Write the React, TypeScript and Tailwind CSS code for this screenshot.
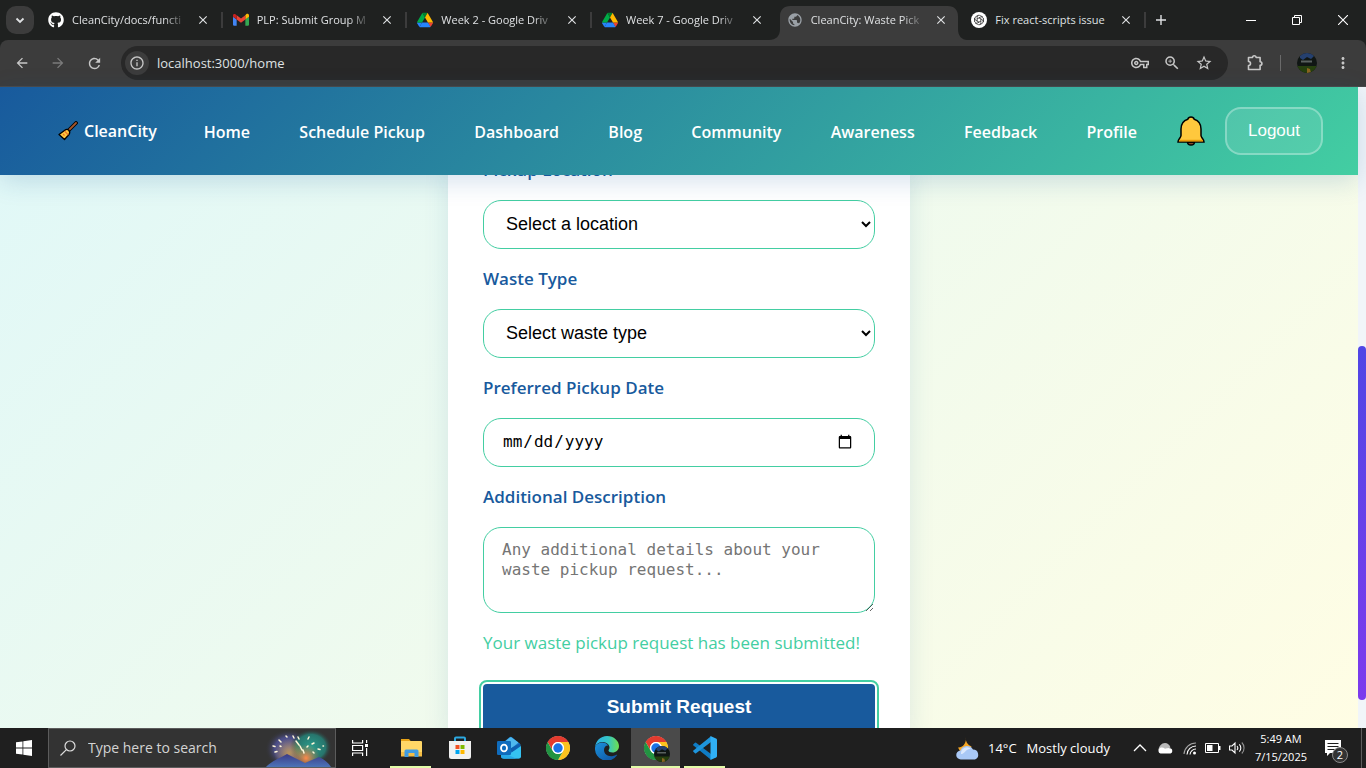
import { useId, type ReactNode } from "react";
import { FaGithub } from "react-icons/fa";
import {
  MdArrowBack,
  MdArrowForward,
  MdClose,
  MdInfoOutline,
  MdMoreVert,
  MdOutlineVpnKey,
  MdPublic,
  MdRefresh,
  MdStarBorder,
  MdZoomIn,
} from "react-icons/md";

/* ---------- Brand icons ---------- */

function GmailIcon() {
  return (
    <svg viewBox="0 0 24 24" className="size-4" aria-hidden="true">
      <path fill="#4285f4" d="M1.6 20.5h3.9V11.2L0 7v12a1.6 1.6 0 0 0 1.6 1.5z" />
      <path fill="#34a853" d="M18.500 20.500h3.900A1.600 1.600 0 0 0 24 19V7l-5.500 4.200z" />
      <path fill="#fbbc04" d="M18.500 4.900v6.300L24 7V5c0-2-2.300-3.200-3.900-2z" />
      <path fill="#ea4335" d="M5.500 11.200V4.900l6.500 4.900 6.500-4.900v6.300L12 16.100z" />
      <path fill="#c5221f" d="M0 5v2l5.500 4.200V4.900L3.900 3.600C2.300 2.400 0 3.500 0 5z" />
    </svg>
  );
}

function DriveIcon() {
  return (
    <svg viewBox="0 0 87.300 78" className="size-4" aria-hidden="true">
      <path fill="#2684fc" d="m6.600 66.850 3.850 6.650c.8 1.400 1.950 2.500 3.300 3.300l13.750-23.800h-27.500c0 1.550.4 3.100 1.200 4.500z" />
      <path fill="#00ac47" d="m43.650 25-13.750-23.800c-1.350.8-2.500 1.900-3.300 3.300l-25.400 44a9.060 9.060 0 0 0-1.200 4.500h27.500z" />
      <path fill="#ea4335" d="m73.550 76.800c1.350-.8 2.500-1.900 3.300-3.300l1.600-2.750 7.650-13.250c.8-1.400 1.200-2.950 1.200-4.500h-27.500l5.850 11.500z" />
      <path fill="#00832d" d="m43.650 25 13.750-23.800c-1.350-.8-2.900-1.200-4.500-1.200h-18.500c-1.600 0-3.150.45-4.500 1.200z" />
      <path fill="#2684fc" d="m59.800 53h-32.300l-13.750 23.800c1.350.8 2.900 1.200 4.500 1.200h50.800c1.600 0 3.150-.45 4.500-1.200z" />
      <path fill="#ffba00" d="m73.400 26.500-12.700-22c-.8-1.400-1.950-2.500-3.300-3.300l-13.750 23.800 16.150 28h27.450c0-1.550-.4-3.100-1.200-4.500z" />
    </svg>
  );
}

function KnotIcon() {
  return (
    <svg viewBox="0 0 24 24" className="size-4" aria-hidden="true">
      <circle cx="12" cy="12" r="12" fill="#fff" />
      <g fill="none" stroke="#222" strokeWidth="1.100">
        {[0, 60, 120, 180, 240, 300].map((a) => (
          <path key={a} transform={`rotate(${a} 12 12)`} d="M9.200 13.600V8.300a3.300 3.300 0 0 1 5-2.800l3.600 2.100" />
        ))}
      </g>
    </svg>
  );
}

function PuzzleIcon() {
  return (
    <svg viewBox="0 0 18 18" className="size-[18px]" fill="none" stroke="currentColor" strokeWidth="1.600" strokeLinejoin="round" aria-hidden="true">
      <path d="M2.500 3.500h4a1.800 1.800 0 0 1 3.600 0h4v4.200a1.800 1.800 0 0 1 0 3.600v4.200H2.500v-4a2 2 0 0 0 0-4z" />
    </svg>
  );
}

function ChromeIcon({ className = "size-6" }: { className?: string }) {
  return (
    <svg viewBox="0 0 48 48" className={className} aria-hidden="true">
      <circle cx="24" cy="24" r="23.500" fill="#fff" />
      <path fill="#e33b2e" d="M24 12h20.800A24 24 0 0 0 3.200 12l10.400 18A12 12 0 0 1 24 12z" />
      <path fill="#fcc31e" d="M34.400 30 24 48a24 24 0 0 0 20.800-36H24a12 12 0 0 1 10.400 18z" />
      <path fill="#229342" d="M13.600 30 3.200 12A24 24 0 0 0 24 48l10.400-18a12 12 0 0 1-20.800 0z" />
      <circle cx="24" cy="24" r="11.800" fill="#fff" />
      <circle cx="24" cy="24" r="9.400" fill="#1a73e8" />
    </svg>
  );
}

function EdgeIcon() {
  const id = useId();
  return (
    <svg viewBox="0 0 48 48" className="size-6" aria-hidden="true">
      <defs>
        <linearGradient id={`${id}a`} x1="0" y1="0.300" x2="1" y2="0.300">
          <stop offset="0" stopColor="#2bb0e8" />
          <stop offset="0.550" stopColor="#35c5c5" />
          <stop offset="1" stopColor="#6fe04c" />
        </linearGradient>
        <linearGradient id={`${id}b`} x1="0" y1="0" x2="1" y2="1">
          <stop offset="0" stopColor="#1b93dc" />
          <stop offset="1" stopColor="#0f4f9d" />
        </linearGradient>
      </defs>
      <path fill={`url(#${id}b)`} d="M0 24c0-6 7-11 15-11 6 0 10 3 11 6-5 0-8 4-8 9 0 9 9 14 18 12 3-.6 5-1.600 7-2.500 1-.4 1.600.4 1 1.200A24 24 0 0 1 0 24z" />
      <path fill={`url(#${id}a)`} d="M0 23C1 10 11 0 24 0c14 0 24 10 24 20 0 8-6 13-13 13-5 0-8-2-8-4 0-1.600 2-2.500 2-6 0-6-6-11-14-11C7 12 1 17 0 23z" />
    </svg>
  );
}

function OutlookIcon() {
  return (
    <svg viewBox="0 0 48 48" className="size-6" aria-hidden="true">
      <path fill="#1a7fd0" d="M8 17 25 2.500a4 4 0 0 1 5 0L47 17v24a4 4 0 0 1-4 4H12a4 4 0 0 1-4-4z" />
      <path fill="#4fb8ee" d="M12 14 26 3a3 3 0 0 1 3 0l14 10-17 14H12z" />
      <path fill="#0f5fb0" d="M25 26 46 14v9L30 33z" />
      <path fill="#35c2f1" d="M48 20 12 45h32a4 4 0 0 0 4-4z" />
      <path fill="#27a9e8" d="M8 31l30 14H12a4 4 0 0 1-4-4z" />
      <rect x="0" y="10" width="28" height="28" rx="2.500" fill="#0f6cbd" />
      <ellipse cx="14" cy="24" rx="6" ry="6.800" fill="none" stroke="#fff" strokeWidth="3.600" />
    </svg>
  );
}

function StoreIcon() {
  return (
    <svg viewBox="0 0 24 24" className="size-6" aria-hidden="true">
      <path d="M7 6V2.500a1 1 0 0 1 1-1h8a1 1 0 0 1 1 1V6" fill="none" stroke="#2ca8e0" strokeWidth="2" />
      <path d="M1 5h22v15.500A2.500 2.500 0 0 1 20.500 23h-17A2.500 2.500 0 0 1 1 20.500z" fill="#f1f1f1" />
      <path fill="#f25022" d="M7.500 9h4v4h-4z" />
      <path fill="#7fba00" d="M12.500 9h4v4h-4z" />
      <path fill="#00a4ef" d="M7.500 14h4v4h-4z" />
      <path fill="#ffb900" d="M12.500 14h4v4h-4z" />
    </svg>
  );
}

function ExplorerIcon() {
  return (
    <svg viewBox="0 0 24 24" className="size-6" aria-hidden="true">
      <path fill="#e8a317" d="M2 3h8l2 2.500H2z" />
      <path fill="#ffd767" d="M2 5h20a1 1 0 0 1 1 1v14H2z" />
      <path fill="#f4bd45" d="M2 16h21v4.500H2z" />
      <path fill="#3f9be0" d="M5.500 21v-6a1.500 1.500 0 0 1 1.500-1.500h11a1.500 1.500 0 0 1 1.500 1.500v6h-4v-4h-6v4z" />
    </svg>
  );
}

function CodeIcon() {
  return (
    <svg viewBox="0 0 24 24" className="size-6" aria-hidden="true">
      <path fill="#0f7cc4" d="M.4 8.300 2 6.800a.9.9 0 0 1 1.100 0L18 18.100v5.600L.4 9.600a.9.9 0 0 1 0-1.300z" />
      <path fill="#1e95dc" d="M.4 15.700 2 17.200c.3.300.8.300 1.100 0L18 5.900V.3L.4 14.400a.9.9 0 0 0 0 1.300z" />
      <path fill="#30b0f5" d="m17.500 0 5.500 2.400c.6.300 1 .8 1 1.500v16.200c0 .7-.4 1.200-1 1.500L17.500 24z" />
    </svg>
  );
}

function Avatar({ className }: { className: string }) {
  const id = useId();
  return (
    <svg viewBox="0 0 20 20" className={className} aria-hidden="true">
      <clipPath id={id}>
        <circle cx="10" cy="10" r="10" />
      </clipPath>
      <g clipPath={`url(#${id})`}>
        <path fill="#101614" d="M0 0h20v20H0z" />
        <path fill="#25406f" d="M3 0h14v3l-3 3-4-2-4 3-3-2z" />
        <path fill="#59615f" d="M4 7.500h11v2H4z" />
        <path fill="#26400f" d="M0 13h20v7H0z" />
        <path fill="#8a6420" d="M10 15l3 1 1 4h-4z" />
      </g>
    </svg>
  );
}

/* ---------- Browser chrome ---------- */

type Tab = { title: string; icon: ReactNode; active?: boolean };

const tabs: Tab[] = [
  { title: "CleanCity/docs/functi", icon: <FaGithub className="size-4 text-white" /> },
  { title: "PLP: Submit Group M", icon: <GmailIcon /> },
  { title: "Week 2 - Google Driv", icon: <DriveIcon /> },
  { title: "Week 7 - Google Driv", icon: <DriveIcon /> },
  { title: "CleanCity: Waste Pick", icon: <MdPublic className="size-4 text-[#9aa0a6]" />, active: true },
  { title: "Fix react-scripts issue", icon: <KnotIcon /> },
];

function TabStrip() {
  return (
    <div className="flex h-10 bg-[#1f2120] pl-1.5 text-[#dfe1e3]">
      <button aria-label="Search tabs" className="mt-1.5 flex size-7 shrink-0 items-center justify-center rounded-[10px] bg-[#3c3c3c]">
        <svg viewBox="0 0 10 10" className="size-2.5" fill="none" stroke="currentColor" strokeWidth="1.800">
          <path d="M1.500 3.500 5 7l3.500-3.500" />
        </svg>
      </button>
      <div className="ml-1 flex max-w-[1108px] min-w-0 flex-1">
        {tabs.map((tab, i) => (
          <div key={tab.title} className="relative flex h-10 min-w-0 flex-1 items-center pr-3 pl-2.5">
            {tab.active && (
              <svg viewBox="0 0 198 34" className="absolute top-1.5 -left-2 h-[34px] w-[198px]" aria-hidden="true">
                <path fill="#3c3c3c" d="M0 34c7 0 11-4 11-11V10C11 4 15 0 21 0h158c6 0 10 4 10 10v13c0 7 4 11 9 11z" />
              </svg>
            )}
            <span className="relative shrink-0">{tab.icon}</span>
            <span
              className={
                i === tabs.length - 1
                  ? "relative ml-2 flex-1 text-[11px] leading-5 whitespace-nowrap"
                  : "relative ml-2 flex-1 text-[11px] leading-5 whitespace-nowrap [mask-image:linear-gradient(90deg,#000_80%,transparent)]"
              }
            >
              {tab.title}
            </span>
            <button aria-label={`Close ${tab.title}`} className="relative ml-2 flex size-4 shrink-0 items-center justify-center">
              <MdClose className="size-3.5" />
            </button>
            {i !== 3 && i !== 4 && <span className="absolute top-3 right-0 h-4 w-0.5 bg-[#3c3c3c]" />}
          </div>
        ))}
      </div>
      <button aria-label="New tab" className="ml-[3px] flex h-10 w-6 items-center justify-center">
        <svg viewBox="0 0 10 10" className="size-2.5" stroke="currentColor" strokeWidth="1.400">
          <path d="M5 0v10M0 5h10" />
        </svg>
      </button>
      <div className="ml-auto flex text-white">
        <button aria-label="Minimize" className="flex h-10 w-[46px] items-center justify-center">
          <span className="h-px w-2.5 bg-white" />
        </button>
        <button aria-label="Restore" className="flex h-10 w-[46px] items-center justify-center">
          <svg viewBox="0 0 10 10" className="size-2.5" fill="none" stroke="currentColor">
            <path d="M.5 2.500h7v7h-7zM2.500 2.500v-2h7v7h-2" />
          </svg>
        </button>
        <button aria-label="Close window" className="flex h-10 w-[46px] items-center justify-center">
          <svg viewBox="0 0 10 10" className="size-2.5" stroke="currentColor" strokeWidth="1.100">
            <path d="M0 0l10 10M10 0L0 10" />
          </svg>
        </button>
      </div>
    </div>
  );
}

function Toolbar() {
  return (
    <div className="bg-[#1f2120]">
      <div className="flex h-[47px] items-center rounded-t-lg border-b border-[#4a4a4a] bg-[#3c3c3c] px-3.5 text-[#c7c7c7]">
        <button aria-label="Back" className="mr-5 shrink-0"><MdArrowBack className="size-4" /></button>
        <button aria-label="Forward" className="mr-5 shrink-0 text-[#7b7b7b]"><MdArrowForward className="size-4" /></button>
        <button aria-label="Reload" className="mr-[18px] shrink-0"><MdRefresh className="size-[17px]" /></button>
        <div className="flex h-[34px] min-w-0 flex-1 items-center rounded-full bg-[#282828] pr-[15px] pl-1">
          <button aria-label="Site information" className="flex size-6 items-center justify-center rounded-full bg-[#3c3c3c]">
            <MdInfoOutline className="size-4" />
          </button>
          <input
            aria-label="Address"
            defaultValue="localhost:3000/home"
            className="ml-2 min-w-0 flex-1 bg-transparent text-[13px] leading-5 text-[#dfe1e3] outline-none"
          />
          <div className="flex items-center gap-3.5">
            <button aria-label="Passwords"><MdOutlineVpnKey className="size-[18px]" /></button>
            <button aria-label="Zoom"><MdZoomIn className="size-[18px]" /></button>
            <button aria-label="Bookmark"><MdStarBorder className="size-[18px]" /></button>
          </div>
        </div>
        <button aria-label="Extensions" className="ml-[18px]"><PuzzleIcon /></button>
        <span className="mx-4 h-4 w-px bg-[#6a6a6a]" />
        <button aria-label="Profile menu"><Avatar className="size-5" /></button>
        <button aria-label="Browser menu" className="ml-[17px]"><MdMoreVert className="size-[18px]" /></button>
      </div>
    </div>
  );
}

/* ---------- CleanCity site ---------- */

const links = ["Home", "Schedule Pickup", "Dashboard", "Blog", "Community", "Awareness", "Feedback", "Profile"];

function BroomIcon() {
  return (
    <svg viewBox="0 0 20 20" className="size-5 shrink-0" aria-hidden="true">
      <path d="M10.500 9.500 18 2" stroke="#000" strokeWidth="3.800" strokeLinecap="round" />
      <path d="M10 10 18 2" stroke="#a5562b" strokeWidth="1.800" strokeLinecap="round" />
      <path d="M6.500 9.500c1.500-1.300 3-1.500 4.300-.3 1.200 1.300 1.200 2.800.2 4.300l-4.500 5L1 13.500z" fill="#ffc83d" stroke="#000" strokeWidth="1.300" strokeLinejoin="round" />
      <path d="m6.600 10.200 3.700 3.800M5 13l1.500 1.500" stroke="#e8702a" strokeWidth="1.100" />
    </svg>
  );
}

function BellIcon() {
  return (
    <svg viewBox="0 0 28 30" className="h-[30px] w-7" aria-hidden="true">
      <path d="M10.500 26h7a3.500 3 0 0 1-7 0z" fill="#8a4b2a" stroke="#000" strokeWidth="1.400" />
      <path
        d="M14 1c1.800 0 2.900 1 3.200 2.200C21.600 4.600 24 8.300 24 13v6.500c0 2 3 3.700 3 6.500H1c0-2.800 3-4.500 3-6.500V13c0-4.700 2.400-8.400 6.800-9.800C11.100 2 12.200 1 14 1z"
        fill="#ffc83d"
        stroke="#000"
        strokeWidth="1.500"
      />
      <path d="M2.400 23.800h23.200l.6 1.700H1.800z" fill="#e89b0c" />
    </svg>
  );
}

function SiteHeader() {
  return (
    <header className="relative z-10 flex h-[88px] shrink-0 items-center bg-[linear-gradient(135deg,#185a9d,#43cea2)] pr-[35px] pl-[58px] text-white shadow-[0_6px_24px_rgba(24,90,157,0.18)]">
      <a href="#home" className="flex shrink-0 items-center gap-1.5 text-[16px] leading-6 font-semibold">
        <BroomIcon />
        CleanCity
      </a>
      <nav className="mr-10 ml-[47px] flex flex-1 justify-between pt-0.5">
        {links.map((l) => (
          <a key={l} href="#home" className="text-[16px] leading-6 font-semibold whitespace-nowrap">
            {l}
          </a>
        ))}
      </nav>
      <button aria-label="Notifications" className="mr-5 shrink-0"><BellIcon /></button>
      <button className="h-12 shrink-0 rounded-2xl border-2 border-white/30 bg-white/10 px-[21px] font-['Liberation_Sans',sans-serif] text-[17px]">
        Logout
      </button>
    </header>
  );
}

const labelClass = "text-[17px] leading-6 font-semibold text-[#185a9d]";
const fieldClass = "w-full rounded-[18px] border border-[#43cea2] bg-white text-black outline-none";

function PickupForm() {
  return (
    <form
      onSubmit={(e) => e.preventDefault()}
      className="-mt-[17px] flex w-[462px] flex-col gap-[18px] bg-white px-[35px] shadow-[0_8px_24px_rgba(24,90,157,0.12)]"
    >
      <label htmlFor="location" className={labelClass}>Pickup Location</label>
      <select id="location" className={`${fieldClass} h-[49px] pr-px pb-0.5 pl-[18px] font-['Liberation_Sans',sans-serif] text-[18px]`}>
        <option>Select a location</option>
      </select>
      <label htmlFor="waste" className={labelClass}>Waste Type</label>
      <select id="waste" className={`${fieldClass} h-[49px] pr-px pb-0.5 pl-[18px] font-['Liberation_Sans',sans-serif] text-[18px]`}>
        <option>Select waste type</option>
      </select>
      <label htmlFor="date" className={labelClass}>Preferred Pickup Date</label>
      <input id="date" type="date" className={`${fieldClass} h-[49px] pr-[19px] pb-0.5 pl-[18px] font-['DejaVu_Sans_Mono',monospace] text-[16px]`} />
      <label htmlFor="details" className={labelClass}>Additional Description</label>
      <textarea
        id="details"
        placeholder="Any additional details about your waste pickup request..."
        className={`${fieldClass} h-[86px] px-[18px] py-3 font-['DejaVu_Sans_Mono',monospace] text-[16px] leading-5 placeholder:text-[#757575]`}
      />
      <p className="text-[17px] leading-6 text-[#43cea2]">Your waste pickup request has been submitted!</p>
      <button className="mt-[11px] h-12 shrink-0 rounded bg-[#185a9d] pb-0.5 font-['Liberation_Sans',sans-serif] text-[19px] font-bold text-white outline-2 outline-offset-2 outline-[#43cea2]">
        Submit Request
      </button>
    </form>
  );
}

/* ---------- Taskbar ---------- */

function TaskButton({ label, children, underline, active }: { label: string; children: ReactNode; underline?: boolean; active?: boolean }) {
  return (
    <button aria-label={label} className={`relative flex h-10 w-[49px] shrink-0 items-center justify-center ${active ? "bg-[#4a4a4a]" : ""}`}>
      {children}
      {(underline || active) && (
        <span className={`absolute bottom-0 h-0.5 bg-[#e2fba8] ${active ? "inset-x-0" : "inset-x-1"}`} />
      )}
    </button>
  );
}

function SearchArt() {
  const id = useId();
  return (
    <svg viewBox="0 0 68 38" className="mr-0.5 h-[38px] w-[68px] shrink-0" aria-hidden="true">
      <defs>
        <radialGradient id={`${id}a`}>
          <stop offset="0" stopColor="#5c5fa8" />
          <stop offset="0.600" stopColor="#4b4d86" />
          <stop offset="1" stopColor="#333" stopOpacity="0" />
        </radialGradient>
        <radialGradient id={`${id}b`}>
          <stop offset="0" stopColor="#2a9c8c" />
          <stop offset="0.700" stopColor="#27756c" />
          <stop offset="1" stopColor="#333" stopOpacity="0" />
        </radialGradient>
        <radialGradient id={`${id}c`}>
          <stop offset="0" stopColor="#ff8a4a" />
          <stop offset="1" stopColor="#c08a50" stopOpacity="0" />
        </radialGradient>
        <radialGradient id={`${id}e`}>
          <stop offset="0" stopColor="#d2a24a" stopOpacity="0.800" />
          <stop offset="1" stopColor="#d2a24a" stopOpacity="0" />
        </radialGradient>
        <linearGradient id={`${id}d`} x1="0" y1="0" x2="0" y2="1">
          <stop offset="0" stopColor="#3b3a86" />
          <stop offset="1" stopColor="#4c74b8" />
        </linearGradient>
      </defs>
      <ellipse cx="24" cy="20" rx="24" ry="20" fill={`url(#${id}a)`} />
      <ellipse cx="46" cy="18" rx="21" ry="18" fill={`url(#${id}b)`} />
      <circle cx="24" cy="24" r="15" fill={`url(#${id}e)`} />
      <circle cx="41" cy="29" r="14" fill={`url(#${id}c)`} />
      <path d="M1 38c4-5 14-9 21-13l18 9 14-6c4 2 9 5 12 10z" fill={`url(#${id}d)`} />
      <g stroke="#fff6d8" strokeWidth="1.500" strokeLinecap="round">
        <path d="M21 7l1 1M14 11l2 2M8 17l2 .5M10 23l2-.5M15 17l1 .5M28 7l1 2M31 12l3 4M35 17l2 4M38 21l1 3M44 8l-1 2M49 14l-2 1M53 20l2 .5M58 17h.5M48 23l1 1M33 8l1 2M43 17l-1 1" />
      </g>
    </svg>
  );
}

function Taskbar() {
  return (
    <footer className="flex h-10 shrink-0 items-center bg-[#1f1f1f] text-white">
      <button aria-label="Start" className="flex h-10 w-12 shrink-0 items-center justify-center">
        <svg viewBox="0 0 16 16" className="size-4" fill="#fff">
          <path d="M0 2.300 6.500 1.400v6.200H0zM7.300 1.300 16 0v7.600H7.300zM0 8.400h6.500v6.200L0 13.700zM7.300 8.400H16V16l-8.700-1.300z" />
        </svg>
      </button>
      <label className="flex h-10 w-72 shrink-0 items-center border border-[#5c5c5c] bg-[#333] pl-[11px]">
        <svg viewBox="0 0 16 16" className="size-4 shrink-0" fill="none" stroke="#ddd" strokeWidth="1.200">
          <circle cx="10" cy="6" r="5" />
          <path d="M6.400 9.600.5 15.500" />
        </svg>
        <input
          aria-label="Search Windows"
          placeholder="Type here to search"
          className="ml-3 min-w-0 flex-1 bg-transparent text-[14px] leading-5 outline-none placeholder:text-[#d4d4d4]"
        />
        <SearchArt />
      </label>
      <button aria-label="Task view" className="mr-0.5 flex h-10 w-12 shrink-0 items-center justify-center">
        <svg viewBox="0 0 16 16" className="size-4" fill="none" stroke="#fff" strokeWidth="1.200">
          <path d="M.6 0v3h10V0M.6 5.500h10v5H.6zM.6 16v-3h10v3M14.600 0v3M14.600 8v8" />
          <path d="M13 4h3v3h-3z" fill="#fff" stroke="none" />
        </svg>
      </button>
      <TaskButton label="File Explorer" underline><ExplorerIcon /></TaskButton>
      <TaskButton label="Microsoft Store"><StoreIcon /></TaskButton>
      <TaskButton label="Outlook"><OutlookIcon /></TaskButton>
      <TaskButton label="Google Chrome"><ChromeIcon /></TaskButton>
      <TaskButton label="Microsoft Edge"><EdgeIcon /></TaskButton>
      <TaskButton label="Google Chrome, CleanCity" active>
        <ChromeIcon />
        <Avatar className="absolute right-[10px] bottom-1.5 size-4" />
      </TaskButton>
      <TaskButton label="Visual Studio Code" underline><CodeIcon /></TaskButton>

      <div className="ml-auto flex h-10 items-center text-[13px]">
        <button className="mr-[23px] flex items-center leading-5 whitespace-nowrap">
          <svg viewBox="0 0 24 24" className="size-6" aria-hidden="true">
            <path fill="#f5a623" d="M10 1a8 8 0 0 0 5.500 9.500L14 15H4l-2-3.500C6 12 10.500 8 10 1z" />
            <path fill="#a9c8f5" d="M5 23.500a4.500 4.500 0 0 1-.5-9 7 7 0 0 1 12.500-1 5.200 5.200 0 0 1 2 10z" />
            <path fill="#dbe8fc" d="M5 18a6 6 0 0 1 10-5c-5-1-6 5-10 5z" />
          </svg>
          <span className="ml-2">14°C</span>
          <span className="ml-2.5">Mostly cloudy</span>
        </button>
        <button aria-label="Show hidden icons" className="mr-2.5">
          <svg viewBox="0 0 14 8" className="h-2 w-3.5" fill="none" stroke="#fff" strokeWidth="1.300">
            <path d="M1 7l6-6 6 6" />
          </svg>
        </button>
        <svg viewBox="0 0 16 12" className="mr-2.5 h-3 w-4" aria-label="OneDrive">
          <path fill="#b9b9b9" d="M1.500 7.500C2 4 4.500 1 8 1c2.500 0 4.500 1.500 5.500 4.500L4 10z" />
          <path fill="#fff" d="M3.500 11.500a3 3 0 0 1-.5-5.500c2-.8 3.500-.3 5 .8 2-.8 4.500-1.300 6-.3a2.800 2.800 0 0 1-.5 5z" />
        </svg>
        <svg viewBox="0 0 14 14" className="mr-2 size-3.5" fill="none" stroke="#fff" strokeWidth="1.100" aria-label="Wi-Fi">
          <path d="M1 13A12 12 0 0 1 13 2" opacity="0.600" />
          <path d="M4 13.500A9 9 0 0 1 13 5M7 13.500A6 6 0 0 1 13 8" />
          <circle cx="11.500" cy="12" r="1.500" fill="#fff" stroke="none" />
        </svg>
        <svg viewBox="0 0 16 10" className="mr-2 h-2.5 w-4" fill="none" stroke="#fff" aria-label="Battery">
          <path d="M.5.5h13v9H.5z" />
          <path d="M2 2h5.500v6H2zM14 3h1.500v4H14z" fill="#fff" stroke="none" />
        </svg>
        <svg viewBox="0 0 16 14" className="mr-2.5 h-3.5 w-4" fill="none" stroke="#fff" strokeWidth="1.100" aria-label="Volume">
          <path d="M.5 5v4H3l3 3V2L3 5zM8 5c1 1.200 1 2.800 0 4M10.300 3.300c2 2 2 5.400 0 7.400" />
          <path d="M12.800 1.500c3 3 3 8 0 11" opacity="0.500" />
        </svg>
        <div className="text-center text-[11px] leading-[18px] whitespace-nowrap">
          <div>5:49 AM</div>
          <div>7/15/2025</div>
        </div>
        <button aria-label="Notifications, 2 new" className="relative ml-[18px] h-10 w-7">
          <svg viewBox="0 0 16 16" className="absolute top-3 left-0 size-4">
            <path fill="#fff" d="M0 0h16v13H5l-3 3v-3H0z" />
            <path stroke="#1f1f1f" d="M2.500 3.500h11M2.500 6.500h11M2.500 9.500h7" />
          </svg>
          <span className="absolute top-[19px] left-[7px] flex size-4 items-center justify-center rounded-full border border-[#8a8a8a] bg-[#333] text-[11px]">2</span>
        </button>
        <span className="mr-1 ml-2 h-10 w-px bg-[#5c5c5c]" />
      </div>
    </footer>
  );
}

export default function App() {
  return (
    <div className="flex h-screen flex-col overflow-hidden font-['Open_Sans',sans-serif]">
      <TabStrip />
      <Toolbar />
      <div className="flex min-h-0 flex-1 bg-[#f1f5f9]">
        <div className="flex min-w-0 flex-1 flex-col">
          <SiteHeader />
          <main className="flex min-h-0 flex-1 items-start justify-center overflow-hidden bg-[linear-gradient(135deg,#e1f8f7,#fffde4)]">
            <PickupForm />
          </main>
        </div>
        <div className="flex w-2 flex-col pt-[259px] pb-7">
          <div className="flex-1 rounded-full bg-linear-to-b from-[#4f46e5] to-[#7c3aed]" />
        </div>
      </div>
      <Taskbar />
    </div>
  );
}
